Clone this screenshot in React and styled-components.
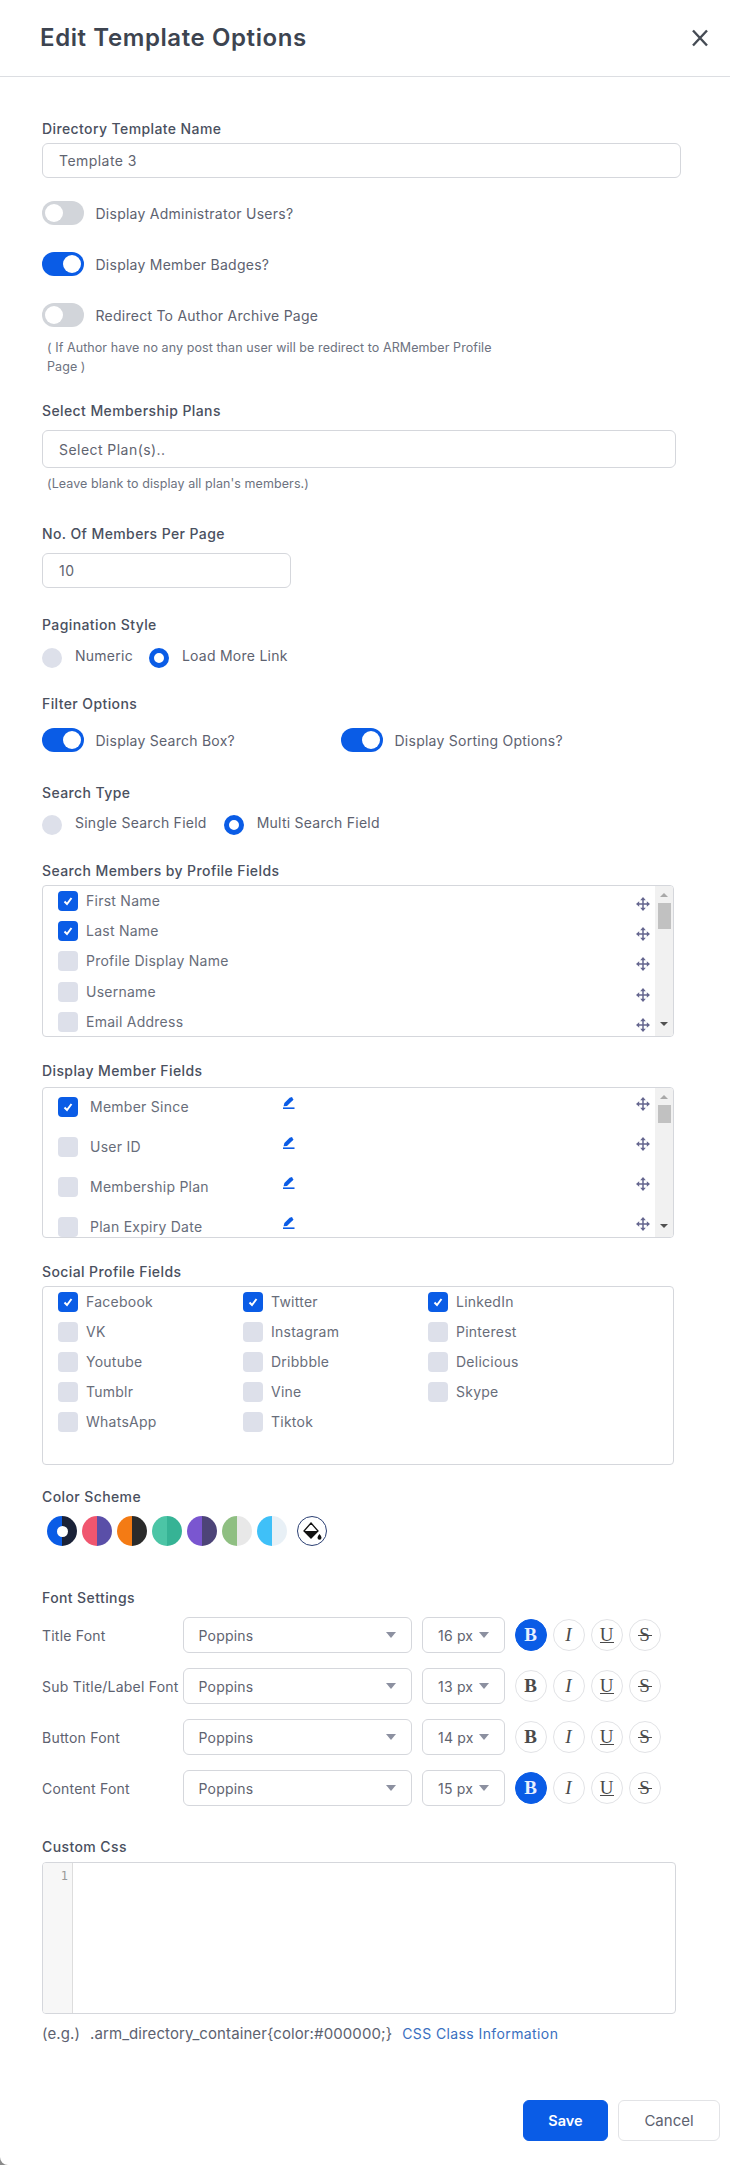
import React from "react";
import styled, { createGlobalStyle } from "styled-components";

const GlobalStyle = createGlobalStyle`
  html, body {
    margin: 0;
    padding: 0;
    background: #8a8a8a;
  }
  body {
    font-family: Inter, "Open Sans", "Liberation Sans", sans-serif;
  }
  * {
    box-sizing: border-box;
  }
`;

const BLUE = "#0a5ce6";

const Modal = styled.div`
  width: 730px;
  height: 2165px;
  background: #fff;
  overflow: hidden;
  border-bottom-left-radius: 8px;
`;

const Header = styled.div`
  height: 77px;
  padding: 0 21px 0 40px;
  border-bottom: 1px solid #dcdee2;
  display: flex;
  align-items: center;
  justify-content: space-between;
`;

const Title = styled.h1`
  margin: 0 0 2px;
  font-size: 24px;
  font-weight: 600;
  letter-spacing: 0.6px;
  color: #3d4450;
`;

const Body = styled.div`
  padding: 42px 0 0 42px;
`;

const Section = styled.div`
  margin-top: ${props => props.$mt || 0}px;
`;

const Label = styled.div`
  font-size: 14px;
  line-height: 20px;
  font-weight: 500;
  letter-spacing: 0.4px;
  color: #4a5060;
`;

const Field = styled.div`
  width: ${props => props.$w}px;
  height: ${props => props.$h}px;
  margin-top: ${props => props.$mt}px;
  padding-left: 16px;
  display: flex;
  align-items: center;
  border: 1px solid #d5d7dc;
  border-radius: 6px;
  font-size: 14px;
  letter-spacing: 0.45px;
  color: #5f6470;
`;

const Row = styled.div`
  display: flex;
  align-items: center;
  margin-top: ${props => props.$mt || 0}px;
`;

const ToggleTrack = styled.span`
  width: 42px;
  height: 24px;
  flex: none;
  display: flex;
  align-items: center;
  justify-content: ${props => (props.$on ? "flex-end" : "flex-start")};
  padding: 0 3px;
  border-radius: 12px;
  background: ${props => (props.$on ? BLUE : "#d2d5da")};

  &::after {
    content: "";
    width: 18px;
    height: 18px;
    border-radius: 50%;
    background: #fff;
  }
`;

const ToggleText = styled.span`
  margin-left: 11.5px;
  width: ${props => props.$w || "auto"};
  font-size: 14px;
  letter-spacing: 0.25px;
  color: #5d6270;
`;

const Note = styled.div`
  margin-top: ${props => props.$mt}px;
  margin-left: 5px;
  font-size: 12.5px;
  line-height: ${props => props.$lh}px;
  letter-spacing: 0.08px;
  color: #6d7280;
`;

const RadioDot = styled.span`
  width: 20px;
  height: 20px;
  flex: none;
  border-radius: 50%;
  background: ${props => (props.$on ? "#fff" : "#dde0ea")};
  border: ${props => (props.$on ? `5px solid ${BLUE}` : "none")};
`;

const RadioText = styled.span`
  margin: 0 ${props => props.$after || 0}px 0 13px;
  padding-bottom: 4px;
  font-size: 14px;
  line-height: 16px;
  letter-spacing: 0.25px;
  color: #5d6270;
`;

const ListBox = styled.div`
  width: ${props => props.$w || 632}px;
  height: ${props => props.$h}px;
  margin-top: ${props => props.$mt}px;
  display: flex;
  overflow: hidden;
  border: 1px solid #d5d7dc;
  border-radius: 4px;
`;

const ListRows = styled.div`
  flex: 1;
  padding-top: ${props => props.$pt}px;
`;

const ListRow = styled.div`
  height: ${props => props.$h}px;
  padding: 0 5px 0 15px;
  display: flex;
  align-items: flex-start;
`;

const CheckBox = styled.span`
  width: 20px;
  height: 20px;
  flex: none;
  display: flex;
  align-items: center;
  justify-content: center;
  border-radius: 4px;
  background: ${props => (props.$on ? BLUE : "#dde0ea")};
`;

const CheckText = styled.span`
  margin-left: ${props => props.$gap || 8}px;
  width: ${props => props.$w || "auto"};
  flex: ${props => (props.$fill ? 1 : "none")};
  font-size: 14px;
  line-height: 20px;
  letter-spacing: 0.25px;
  color: #686d7a;
`;

const MoveHandle = styled.span`
  margin-left: auto;
  padding-top: ${props => props.$pt}px;
  line-height: 0;
`;

const Rail = styled.div`
  width: 18px;
  flex: none;
  background: #f1f1f1;
  display: flex;
  flex-direction: column;
  align-items: center;
  padding-top: 7px;
`;

const RailArrow = styled.span`
  width: 0;
  height: 0;
  border-left: 4px solid transparent;
  border-right: 4px solid transparent;
  border-${props => (props.$up ? "bottom" : "top")}: 4px solid ${props => (props.$up ? "#a8a8a8" : "#505050")};
  margin-top: ${props => props.$mt || 0}px;
`;

const RailThumb = styled.span`
  width: 13px;
  height: ${props => props.$h}px;
  margin-top: 6px;
  background: #c1c1c1;
`;

const SocialGrid = styled.div`
  padding: 5px 0 0 15px;
  display: grid;
  grid-template-columns: 185px 185px 185px;
  grid-auto-rows: 30px;
  width: 100%;
`;

const SocialItem = styled.div`
  display: flex;
  align-items: flex-start;
`;

const Swatches = styled.div`
  display: flex;
  margin: 9px 0 0 5px;
  gap: 5px;
`;

const Swatch = styled.span`
  width: 30px;
  height: 30px;
  border-radius: 50%;
  display: flex;
  align-items: center;
  justify-content: center;
  background: linear-gradient(90deg, ${props => props.$a} 50%, ${props => props.$b} 50%);

  &::after {
    content: "";
    display: ${props => (props.$selected ? "block" : "none")};
    width: 11px;
    height: 11px;
    border-radius: 50%;
    background: #fff;
  }
`;

const BucketButton = styled.span`
  width: 30px;
  height: 30px;
  margin-left: 5px;
  border: 1px solid #2b3f73;
  border-radius: 50%;
  display: flex;
  align-items: center;
  justify-content: center;
`;

const FontRow = styled.div`
  display: flex;
  align-items: center;
  margin-top: ${props => props.$mt}px;
  height: 36px;
`;

const FontName = styled.span`
  width: 140.5px;
  flex: none;
  font-size: 14px;
  letter-spacing: 0.22px;
  white-space: nowrap;
  color: #5d6270;
`;

const Select = styled.div`
  width: ${props => props.$w}px;
  height: 36px;
  margin-right: ${props => props.$mr}px;
  padding: 0 ${props => props.$pr}px 0 15px;
  flex: none;
  display: flex;
  align-items: center;
  justify-content: space-between;
  border: 1px solid #d5d7dc;
  border-radius: 6px;
  font-size: 14px;
  letter-spacing: 0.2px;
  color: #5f6470;

  &::after {
    content: "";
    border-left: 5px solid transparent;
    border-right: 5px solid transparent;
    border-top: 6px solid #8c90a0;
  }
`;

const StyleButton = styled.span`
  position: relative;
  width: 32px;
  height: 32px;
  margin-right: 6px;
  flex: none;
  display: flex;
  align-items: center;
  justify-content: center;
  border-radius: 50%;
  border: 1px solid ${props => (props.$on ? BLUE : "#e2e3e6")};
  background: ${props => (props.$on ? BLUE : "#fff")};
  color: ${props => (props.$on ? "#e8f0ff" : "#4a4a4a")};
  font-family: "Liberation Serif", serif;
  font-size: 19px;
  font-weight: ${props => (props.$b ? 700 : 400)};
  font-style: ${props => (props.$i ? "italic" : "normal")};

  &::after {
    content: "";
    display: ${props => (props.$line ? "block" : "none")};
    position: absolute;
    left: 8px;
    right: 8px;
    top: ${props => props.$line}px;
    height: 1px;
    background: #4a4a4a;
  }
`;

const Editor = styled.div`
  width: 633.5px;
  height: 152px;
  margin-top: 5px;
  display: flex;
  overflow: hidden;
  border: 1px solid #d5d7dc;
  border-radius: 4px;
`;

const Gutter = styled.div`
  width: 30px;
  padding: 3px 4px 0 0;
  text-align: right;
  background: #f7f7f7;
  border-right: 1px solid #ddd;
  font-family: "DejaVu Sans Mono", "Liberation Mono", monospace;
  font-size: 12px;
  line-height: 20px;
  color: #999;
`;

const Example = styled.div`
  margin-top: 9px;
  height: 20px;
  display: flex;
  align-items: center;
  font-size: 15px;
  letter-spacing: 0.1px;
  color: #5d6270;
`;

const ExampleCode = styled.span`
  margin-left: 10px;
`;

const ClassLink = styled.a`
  margin-left: 10px;
  font-size: 14px;
  letter-spacing: 0.4px;
  color: #3a6fc0;
  text-decoration: none;
`;

const Footer = styled.div`
  margin-top: 57px;
  padding-right: 10px;
  display: flex;
  justify-content: flex-end;
  gap: 10px;
`;

const ActionButton = styled.button`
  width: ${props => props.$w}px;
  height: 41px;
  padding: 0;
  border-radius: 6px;
  border: 1px solid ${props => (props.$primary ? BLUE : "#e2e3e6")};
  background: ${props => (props.$primary ? BLUE : "#fff")};
  color: ${props => (props.$primary ? "#fff" : "#5d6270")};
  font-family: inherit;
  font-size: ${props => (props.$primary ? 14.5 : 15)}px;
  font-weight: ${props => (props.$primary ? 600 : 400)};
`;

const CheckMark = () => (
  <svg width="12" height="12" viewBox="0 0 12 12">
    <path d="M2.5 6.5 L5 9 L9.5 3" fill="none" stroke="#fff" strokeWidth="2" />
  </svg>
);

const MoveIcon = () => (
  <svg width="14" height="14" viewBox="0 0 14 14" fill="#65668f">
    <path d="M7 1v12M1 7h12" fill="none" stroke="#65668f" strokeWidth="1.5" />
    <path d="M7 0l2.8 3.2H4.2zM7 14l2.8-3.2H4.2zM0 7l3.2-2.8v5.6zM14 7l-3.2-2.8v5.6z" />
  </svg>
);

const PenIcon = () => (
  <svg width="12" height="12" viewBox="0 0 12 12" fill={BLUE}>
    <path d="M0.6 9.2 L1.4 6 L6.6 0.8 L9 0 L10.2 2.2 L9.8 3.2 L4 9 Z" />
    <rect x="0" y="10.4" width="11.5" height="1.6" />
  </svg>
);

const BucketIcon = () => (
  <svg width="22" height="22" viewBox="0 0 22 22">
    <path d="M10 3 L17 11 L10 18 L3 11 Z" fill="#fff" stroke="#111" strokeWidth="1.3" />
    <path d="M3 11 H17 L10 18 Z" fill="#111" />
    <path d="M18.5 14 C20 16 20.5 17 20.5 17.8 A2 2 0 0 1 16.5 17.8 C16.5 17 17 16 18.5 14Z" fill="#111" />
  </svg>
);

const CloseIcon = () => (
  <svg width="18" height="18" viewBox="0 0 18 18">
    <path d="M2 1.5 L16 16.5 M16 1.5 L2 16.5" stroke="#454b54" strokeWidth="2.4" fill="none" />
  </svg>
);

const profileFields = [
  ["First Name", true],
  ["Last Name", true],
  ["Profile Display Name", false],
  ["Username", false],
  ["Email Address", false],
];

const memberFields = [
  ["Member Since", true],
  ["User ID", false],
  ["Membership Plan", false],
  ["Plan Expiry Date", false],
];

const socialFields = [
  ["Facebook", true], ["Twitter", true], ["LinkedIn", true],
  ["VK"], ["Instagram"], ["Pinterest"],
  ["Youtube"], ["Dribbble"], ["Delicious"],
  ["Tumblr"], ["Vine"], ["Skype"],
  ["WhatsApp"], ["Tiktok"],
];

const swatches = [
  ["#0a5ce6", "#1a2238", true],
  ["#f0566f", "#5a4fa8"],
  ["#f47b14", "#2b2b2b"],
  ["#4cc5a6", "#36b395"],
  ["#7a56d0", "#4d4478"],
  ["#8fbf82", "#e8e8e8"],
  ["#3fc0f8", "#e8f0f6"],
];

const fontRows = [
  ["Title Font", "16 px", true, 9],
  ["Sub Title/Label Font", "13 px", false, 15],
  ["Button Font", "14 px", false, 15],
  ["Content Font", "15 px", true, 15],
];

const Toggle = ({ on, children }) => (
  <>
    <ToggleTrack $on={on} />
    <ToggleText>{children}</ToggleText>
  </>
);

const ScrollRail = ({ thumb, gap }) => (
  <Rail>
    <RailArrow $up />
    <RailThumb $h={thumb} />
    <RailArrow $mt={gap} />
  </Rail>
);

const App = () => {
  return (
    <Modal>
      <GlobalStyle />
      <Header>
        <Title>Edit Template Options</Title>
        <CloseIcon />
      </Header>
      <Body>
        <Label>Directory Template Name</Label>
        <Field $w={639} $h={35} $mt={4}>Template 3</Field>

        <Row $mt={23}><Toggle>Display Administrator Users?</Toggle></Row>
        <Row $mt={27}><Toggle on>Display Member Badges?</Toggle></Row>
        <Row $mt={27}><Toggle>Redirect To Author Archive Page</Toggle></Row>
        <Note $mt={11} $lh={19}>
          ( If Author have no any post than user will be redirect to ARMember Profile<br />Page )
        </Note>

        <Section $mt={25}>
          <Label>Select Membership Plans</Label>
          <Field $w={633.5} $h={38} $mt={9}>Select Plan(s)..</Field>
          <Note $mt={6} $lh={20}>(Leave blank to display all plan's members.)</Note>
        </Section>

        <Section $mt={30}>
          <Label>No. Of Members Per Page</Label>
          <Field $w={249} $h={35} $mt={9}>10</Field>
        </Section>

        <Section $mt={27}>
          <Label>Pagination Style</Label>
          <Row $mt={13}>
            <RadioDot />
            <RadioText $after={16}>Numeric</RadioText>
            <RadioDot $on />
            <RadioText>Load More Link</RadioText>
          </Row>
        </Section>

        <Section $mt={26}>
          <Label>Filter Options</Label>
          <Row $mt={14}>
            <ToggleTrack $on />
            <ToggleText $w="245.5px">Display Search Box?</ToggleText>
            <ToggleTrack $on />
            <ToggleText>Display Sorting Options?</ToggleText>
          </Row>
        </Section>

        <Section $mt={31}>
          <Label>Search Type</Label>
          <Row $mt={12}>
            <RadioDot />
            <RadioText $after={17}>Single Search Field</RadioText>
            <RadioDot $on />
            <RadioText>Multi Search Field</RadioText>
          </Row>
        </Section>

        <Section $mt={26}>
          <Label>Search Members by Profile Fields</Label>
          <ListBox $h={152} $mt={4}>
            <ListRows $pt={5}>
              {profileFields.map(([name, on]) => (
                <ListRow $h={30.2} key={name}>
                  <CheckBox $on={on}>{on ? <CheckMark /> : null}</CheckBox>
                  <CheckText $fill>{name}</CheckText>
                  <MoveHandle $pt={6}><MoveIcon /></MoveHandle>
                </ListRow>
              ))}
            </ListRows>
            <ScrollRail thumb={26} gap={93} />
          </ListBox>
        </Section>

        <Section $mt={24}>
          <Label>Display Member Fields</Label>
          <ListBox $h={151} $mt={6}>
            <ListRows $pt={9}>
              {memberFields.map(([name, on]) => (
                <ListRow $h={40} key={name}>
                  <CheckBox $on={on}>{on ? <CheckMark /> : null}</CheckBox>
                  <CheckText $gap={12} $w="193px">{name}</CheckText>
                  <PenIcon />
                  <MoveHandle $pt={0}><MoveIcon /></MoveHandle>
                </ListRow>
              ))}
            </ListRows>
            <ScrollRail thumb={18} gap={101} />
          </ListBox>
        </Section>

        <Section $mt={24}>
          <Label>Social Profile Fields</Label>
          <ListBox $h={179} $mt={4}>
            <SocialGrid>
              {socialFields.map(([name, on]) => (
                <SocialItem key={name}>
                  <CheckBox $on={on}>{on ? <CheckMark /> : null}</CheckBox>
                  <CheckText>{name}</CheckText>
                </SocialItem>
              ))}
            </SocialGrid>
          </ListBox>
        </Section>

        <Section $mt={22}>
          <Label>Color Scheme</Label>
          <Swatches>
            {swatches.map(([a, b, selected]) => (
              <Swatch key={a + b} $a={a} $b={b} $selected={selected} />
            ))}
            <BucketButton><BucketIcon /></BucketButton>
          </Swatches>
        </Section>

        <Section $mt={42}>
          <Label>Font Settings</Label>
          {fontRows.map(([name, size, bold, mt]) => (
            <FontRow key={name} $mt={mt}>
              <FontName>{name}</FontName>
              <Select $w={229} $mr={10.5} $pr={15}>Poppins</Select>
              <Select $w={82.5} $mr={10} $pr={15}>{size}</Select>
              <StyleButton $b $on={bold}>B</StyleButton>
              <StyleButton $i>I</StyleButton>
              <StyleButton $line={22}>U</StyleButton>
              <StyleButton $line={15}>S</StyleButton>
            </FontRow>
          ))}
        </Section>

        <Section $mt={31}>
          <Label>Custom Css</Label>
          <Editor><Gutter>1</Gutter></Editor>
          <Example>
            <span>(e.g.)</span>
            <ExampleCode>.arm_directory_container{"{"}color:#000000;{"}"}</ExampleCode>
            <ClassLink href="#">CSS Class Information</ClassLink>
          </Example>
        </Section>

        <Footer>
          <ActionButton $primary $w={85}>Save</ActionButton>
          <ActionButton $w={102}>Cancel</ActionButton>
        </Footer>
      </Body>
    </Modal>
  );
};

export default App;
